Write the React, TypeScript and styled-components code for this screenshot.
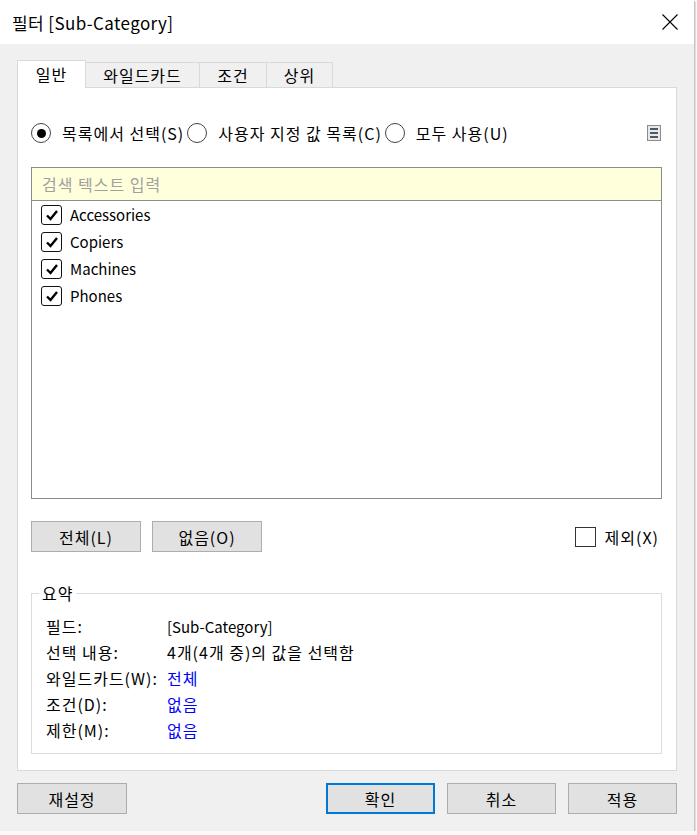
import React from 'react';
import styled, { createGlobalStyle } from 'styled-components';

const GlobalStyle = createGlobalStyle`
  html, body {
    margin: 0;
    padding: 0;
    background: #fafafa;
  }
  body {
    font-family: "Noto Sans CJK KR", "Noto Sans", sans-serif;
    font-size: 16px;
    letter-spacing: 1px;
    color: #000;
  }
  * { box-sizing: border-box; }
`;

const Window = styled.div`
  width: 694px;
  height: 831px;
  display: flex;
  flex-direction: column;
  background: #f0f0f0;
  box-shadow: 1px 1px 0 #c4c4c4, 2px 2px 0 #e0e0e0;
`;

const TitleBar = styled.div`
  height: 44px;
  flex: none;
  background: #fff;
  display: flex;
  align-items: center;
  justify-content: space-between;
  padding: 0 16px 0 12px;
  font-size: 17px;
  letter-spacing: 0.4px;
`;

const Body = styled.div`
  flex: 1;
  display: flex;
  flex-direction: column;
  padding: 16px 17px 0 17px;
`;

const TabStrip = styled.div`
  display: flex;
  align-items: flex-end;
  height: 28px;
  margin-bottom: -1px;
  position: relative;
  z-index: 1;
`;

const Tab = styled.div<{ $width: number; $active?: boolean }>`
  width: ${(p) => p.$width}px;
  height: ${(p) => (p.$active ? 28 : 26)}px;
  margin-left: -1px;
  display: flex;
  align-items: center;
  justify-content: center;
  border: 1px solid #d9d9d9;
  border-bottom: ${(p) => (p.$active ? 'none' : '1px solid #d9d9d9')};
  background: ${(p) => (p.$active ? '#fff' : '#f0f0f0')};
  font-size: 16px;
  padding-bottom: ${(p) => (p.$active ? 2 : 0)}px;
  &:first-child { margin-left: 0; }
`;

const Panel = styled.div`
  height: 684px;
  flex: none;
  background: #fff;
  border: 1px solid #d9d9d9;
  padding: 0 14px 0 13px;
  display: flex;
  flex-direction: column;
`;

const RadioRow = styled.div`
  margin-top: 35px;
  height: 20px;
  display: flex;
  align-items: center;
`;

const RadioItem = styled.label`
  display: flex;
  align-items: center;
  gap: 11px;
  margin-right: 3px;
  white-space: nowrap;
`;

const RadioCircle = styled.span<{ $checked?: boolean }>`
  width: 20px;
  height: 20px;
  border-radius: 50%;
  border: 1px solid #444;
  display: flex;
  align-items: center;
  justify-content: center;
  &::after {
    content: '';
    width: 9px;
    height: 9px;
    border-radius: 50%;
    background: ${(p) => (p.$checked ? '#000' : 'transparent')};
  }
`;

const MenuButton = styled.span`
  margin-left: auto;
  margin-right: 1px;
  width: 14px;
  height: 16px;
  border: 1px solid #8c8c8c;
  background: #e8e8e8;
  display: flex;
  flex-direction: column;
  justify-content: center;
  align-items: center;
  gap: 2px;
  & > i {
    display: block;
    width: 8px;
    height: 2px;
    background: #4a5868;
  }
`;

const ListBox = styled.div`
  margin-top: 24px;
  height: 332px;
  border: 1px solid #8c8c8c;
  display: flex;
  flex-direction: column;
`;

const SearchField = styled.div`
  height: 33px;
  flex: none;
  background: #ffffdc;
  border-bottom: 1px solid #8c8c8c;
  display: flex;
  align-items: center;
  padding-left: 10px;
  color: #a0a0a0;
`;

const Items = styled.div`
  padding: 0 0 0 9px;
`;

const Item = styled.div`
  height: 27px;
  display: flex;
  align-items: center;
  gap: 8px;
  font-size: 15px;
  letter-spacing: 0;
`;

const CheckBox = styled.span<{ $heavy?: boolean }>`
  width: 21px;
  height: 20px;
  border: ${(p) => (p.$heavy ? '1.5px solid #111' : '1px solid #333')};
  border-radius: ${(p) => (p.$heavy ? 3 : 0)}px;
  background: #fff;
  display: flex;
  align-items: center;
  justify-content: center;
`;

const ButtonRow = styled.div`
  margin-top: 22px;
  display: flex;
  align-items: center;
  gap: 11px;
`;

const Button = styled.div<{ $primary?: boolean; $width?: number }>`
  width: ${(p) => p.$width ?? 110}px;
  height: 31px;
  display: flex;
  align-items: center;
  justify-content: center;
  background: #e1e1e1;
  border: ${(p) => (p.$primary ? '2px solid #0078d7' : '1px solid #adadad')};
  font-size: 16px;
`;

const Exclude = styled.label`
  margin-left: auto;
  margin-right: 3px;
  display: flex;
  align-items: center;
  gap: 9px;
`;

const Summary = styled.fieldset`
  margin: 33px 0 0 0;
  padding: 12px 0 0 0;
  height: 169px;
  border: 1px solid #dcdcdc;
  min-width: 0;
`;

const Legend = styled.legend`
  margin-left: 7px;
  padding: 0 3px;
  line-height: 16px;
  font-size: 16px;
`;

const SummaryGrid = styled.div`
  display: grid;
  grid-template-columns: 121px 1fr;
  grid-auto-rows: 26px;
  align-items: center;
  padding-left: 14px;
`;

const Value = styled.span<{ $link?: boolean; $latin?: boolean }>`
  color: ${(p) => (p.$link ? '#0000ff' : '#000')};
  font-size: ${(p) => (p.$latin ? 15 : 16)}px;
  letter-spacing: ${(p) => (p.$latin ? 0 : 1)}px;
`;

const Footer = styled.div`
  margin-top: 12px;
  display: flex;
  gap: 12px;
  & > :nth-child(2) { margin-left: auto; }
`;

const CloseIcon = () => (
  <svg width="16" height="16" viewBox="0 0 16 16">
    <path d="M0.5 0.5 L15.5 15.5 M15.5 0.5 L0.5 15.5" stroke="#000" strokeWidth="1.1" fill="none" />
  </svg>
);

const Check = () => (
  <svg width="14" height="12" viewBox="0 0 14 12">
    <path d="M2 6.5 L5.5 10 L12 2" stroke="#000" strokeWidth="2.4" fill="none" />
  </svg>
);

const items = ['Accessories', 'Copiers', 'Machines', 'Phones'];

const summary: [string, string, boolean, boolean][] = [
  ['필드:', '[Sub-Category]', false, true],
  ['선택 내용:', '4개(4개 중)의 값을 선택함', false, false],
  ['와일드카드(W):', '전체', true, false],
  ['조건(D):', '없음', true, false],
  ['제한(M):', '없음', true, false],
];

export default function App() {
  return (
    <Window>
      <GlobalStyle />
      <TitleBar>
        <span>필터 [Sub-Category]</span>
        <CloseIcon />
      </TitleBar>
      <Body>
        <TabStrip>
          <Tab $width={69} $active>일반</Tab>
          <Tab $width={115}>와일드카드</Tab>
          <Tab $width={68}>조건</Tab>
          <Tab $width={67}>상위</Tab>
        </TabStrip>
        <Panel>
          <RadioRow>
            <RadioItem>
              <RadioCircle $checked />
              목록에서 선택(S)
            </RadioItem>
            <RadioItem>
              <RadioCircle />
              사용자 지정 값 목록(C)
            </RadioItem>
            <RadioItem>
              <RadioCircle />
              모두 사용(U)
            </RadioItem>
            <MenuButton>
              <i />
              <i />
              <i />
            </MenuButton>
          </RadioRow>
          <ListBox>
            <SearchField>검색 텍스트 입력</SearchField>
            <Items>
              {items.map((name) => (
                <Item key={name}>
                  <CheckBox $heavy>
                    <Check />
                  </CheckBox>
                  {name}
                </Item>
              ))}
            </Items>
          </ListBox>
          <ButtonRow>
            <Button>전체(L)</Button>
            <Button>없음(O)</Button>
            <Exclude>
              <CheckBox />
              제외(X)
            </Exclude>
          </ButtonRow>
          <Summary>
            <Legend>요약</Legend>
            <SummaryGrid>
              {summary.map(([label, value, link, latin]) => (
                <React.Fragment key={label}>
                  <span>{label}</span>
                  <Value $link={link} $latin={latin}>{value}</Value>
                </React.Fragment>
              ))}
            </SummaryGrid>
          </Summary>
        </Panel>
        <Footer>
          <Button $width={110}>재설정</Button>
          <Button $width={109} $primary>확인</Button>
          <Button $width={109}>취소</Button>
          <Button $width={109}>적용</Button>
        </Footer>
      </Body>
    </Window>
  );
}
